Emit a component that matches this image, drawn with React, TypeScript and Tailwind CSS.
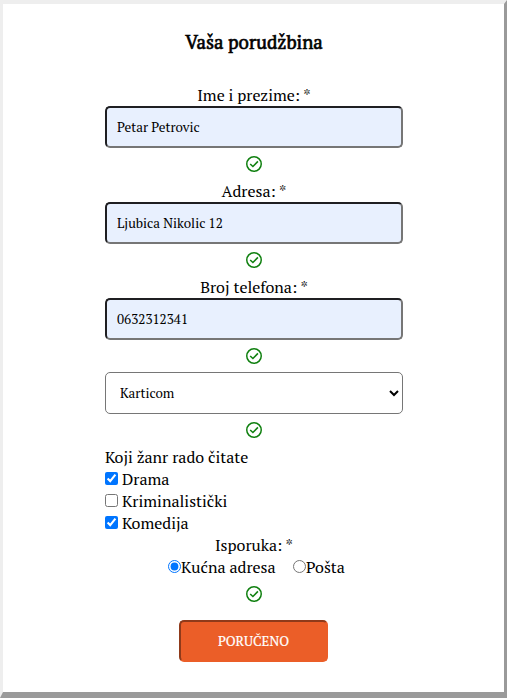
import React from "react";

function ValidMark() {
  return (
    <div className="flex h-8 items-center justify-center">
      <svg width="16" height="16" viewBox="0 0 16 16" fill="none" stroke="#108010" strokeWidth="1.5">
        <circle cx="8" cy="8" r="7.25" />
        <path d="M4.2 8 6.9 10.5 11.9 5.4" strokeWidth="1.6" />
      </svg>
    </div>
  );
}

function Field({ label, value }: { label: string; value: string }) {
  return (
    <div>
      <label className="block h-[22px] text-center leading-[22px] whitespace-nowrap">{label}</label>
      <input
        type="text"
        defaultValue={value}
        className="block h-[42px] w-full rounded-[5px] border-2 border-t-[#1f1f22] border-r-[#767676] border-b-[#767676] border-l-[#1f1f22] bg-[#e8f0fe] px-[10px] text-[13.333px] text-black outline-none"
      />
      <ValidMark />
    </div>
  );
}

function Genre({ label, checked }: { label: string; checked: boolean }) {
  return (
    <label className="flex h-[22px] items-center leading-[22px]">
      <input type="checkbox" defaultChecked={checked} className="mr-1 mb-px size-[13px]" />
      <span>{label}</span>
    </label>
  );
}

export default function App() {
  return (
    <div className="h-[698px] w-[510px] overflow-hidden bg-white">
      <main className="h-[698px] w-[507px] border-t-4 border-r-3 border-b-6 border-l-3 border-t-[#eeeeee] border-r-[#9a9a9a] border-b-[#9a9a9a] border-l-[#eeeeee] bg-white font-['PT_Serif','Liberation_Serif',serif] text-[16px] text-black">
        <form className="ml-[102px] w-[298px] pt-[25px]">
          <h1 className="mb-[23px] h-8 text-center text-[18.72px] leading-[26px] font-normal whitespace-nowrap [-webkit-text-stroke:0.6px_black]">
            Vaša porudžbina
          </h1>
          <Field label="Ime i prezime: *" value="Petar Petrovic" />
          <Field label="Adresa: *" value="Ljubica Nikolic 12" />
          <Field label="Broj telefona: *" value="0632312341" />
          <select className="block h-[42px] w-full rounded-[5px] border border-[#767676] bg-white pr-[11px] pl-[10px] text-[13.333px] text-black">
            <option>Karticom</option>
          </select>
          <ValidMark />
          <p className="h-[22px] leading-[22px]">Koji žanr rado čitate</p>
          <Genre label="Drama" checked />
          <Genre label="Kriminalistički" checked={false} />
          <Genre label="Komedija" checked />
          <p className="h-[22px] text-center leading-[22px]">Isporuka: *</p>
          <div className="ml-[63px] flex h-[22px] items-center leading-[22px] whitespace-nowrap">
            <label className="flex w-[125px] items-center">
              <input type="radio" name="isporuka" defaultChecked className="mb-px size-[13px]" />
              <span>Kućna adresa</span>
            </label>
            <label className="flex items-center">
              <input type="radio" name="isporuka" className="mb-px size-[13px]" />
              <span>Pošta</span>
            </label>
          </div>
          <ValidMark />
          <button
            type="button"
            className="mt-[10px] ml-[74px] block h-[42px] w-[149px] rounded-[5px] border-2 border-t-[#8f3a1a] border-r-[#eb5e28] border-b-[#eb5e28] border-l-[#8f3a1a] bg-[#eb5e28] pt-[2px] text-[13.333px] text-white [-webkit-text-stroke:0.2px_white]"
          >
            PORUČENO
          </button>
        </form>
      </main>
    </div>
  );
}
